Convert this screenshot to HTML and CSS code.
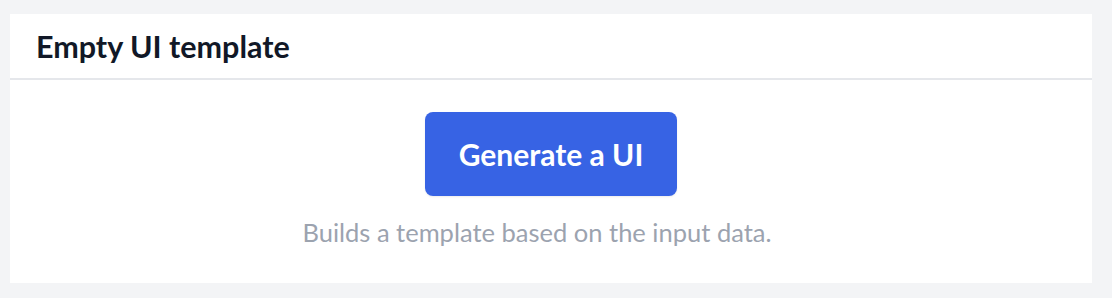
FILE: index.html
```html
<!DOCTYPE html>
<html>
<head>
<meta charset="utf-8">
<link rel="stylesheet" href="styles.css">
</head>
<body>
<div class="card">
  <div class="card-header"><h1 class="title">Empty UI template</h1></div>
  <div class="card-body">
    <button class="btn">Generate a UI</button>
    <p class="hint">Builds a template based on the input data.</p>
  </div>
</div>
</body>
</html>
```

FILE: styles.css
```css
html, body { margin: 0; padding: 0; }
body {
  background: #f3f4f6;
  font-family: "Lato", "Noto Sans", sans-serif;
  width: 1112px;
  height: 298px;
  padding: 14px 20px 0 10px;
  box-sizing: border-box;
}
.card {
  background: #fff;
  height: 269px;
  display: flex;
  flex-direction: column;
}
.card-header {
  height: 66px;
  border-bottom: 2px solid #e5e7eb;
  display: flex;
  align-items: center;
  padding-left: 26px;
  box-sizing: border-box;
}
.title {
  margin: 0;
  font-size: 30.5px;
  font-weight: 700;
  color: #111827;
}
.card-body {
  display: flex;
  flex-direction: column;
  align-items: center;
  padding-top: 32px;
}
.btn {
  width: 252px;
  height: 84px;
  border: none;
  border-radius: 8px;
  background: #3763e4;
  color: #fff;
  font-family: inherit;
  font-size: 30px;
  font-weight: 700;
  box-shadow: 0 1px 2px rgba(0,0,0,0.08);
}
.hint {
  margin: 21px 0 0;
  padding-right: 28px;
  font-size: 25.5px;
  color: #9ca3af;
}
```
